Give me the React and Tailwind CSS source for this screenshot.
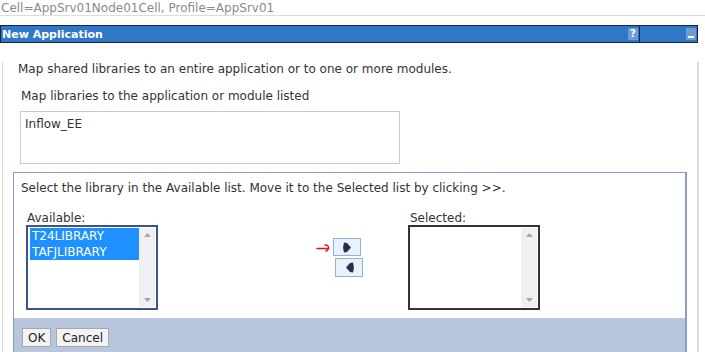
const FONT = { fontFamily: '"DejaVu Sans", Verdana, sans-serif' };

const Arrow = ({ left }) => (
  <svg width="9" height="11" viewBox="0 0 9 11" className="block">
    <polygon
      points={left ? "8,0.5 5,1 1,5.5 5,10 8,10.5 9,5.5" : "1,0.5 4,1 8,5.5 4,10 1,10.5 0,5.5"}
      fill="#2b2d4e"
    />
  </svg>
);

const ListBox = ({ items, border }) => (
  <div className={`flex w-[132px] h-[85px] bg-white border ${border}`}>
    <div className="flex-1 pt-[1px] pl-[2px]">
      {items.map((it) => (
        <div key={it} className="h-[16px] w-[109px] bg-[#1e90ff] text-white text-[12px] leading-[16px] pl-[2px]">
          {it}
        </div>
      ))}
    </div>
    <div className="w-[16px] my-[1px] mr-[1px] bg-[#f0f0f0] flex flex-col justify-between items-center py-[5px]">
      <svg width="7" height="4"><polygon points="0,4 3.5,0 7,4" fill="#a6a6a6" /></svg>
      <svg width="7" height="4"><polygon points="0,0 3.5,4 7,0" fill="#a6a6a6" /></svg>
    </div>
  </div>
);

export default function App() {
  return (
    <div className="w-[705px] h-[352px] overflow-hidden bg-white text-[#333]" style={FONT}>
      {/* breadcrumb */}
      <div className="h-[16px] border-b border-[#dcdcdc] text-[12px] leading-[14px] text-[#8a8a8a] pl-[1px] pt-[1px]">
        Cell=AppSrv01Node01Cell, Profile=AppSrv01
      </div>

      <div className="mt-[9px] w-[699px]">
        {/* title bar */}
        <div className="flex h-[18px] w-[698px] border border-[#17263f] bg-[#3077c8]">
          <div className="flex-1 flex items-center pl-[1px] text-white text-[11px] font-bold leading-none">
            New Application
            <div className="ml-auto mr-[1px] w-[10px] h-[12px] bg-[#6d9bd3] text-white text-[10px] font-bold flex items-center justify-center">?</div>
          </div>
          <div className="w-[58px] border-l border-[#17263f] flex items-center justify-end pr-[1px]">
            <div className="w-[10px] h-[12px] bg-[#6d9bd3] flex items-end justify-center pb-[2px]">
              <div className="w-[6px] h-[2px] bg-white" />
            </div>
          </div>
        </div>

        {/* body */}
        <div className="border-l border-[#dcdcdc] border-r-2 ml-[2px] h-[320px]">
          <p className="mt-[19px] ml-[15px] text-[12px] leading-[15px]">
            Map shared libraries to an entire application or to one or more modules.
          </p>
          <p className="mt-[12px] ml-[18px] text-[12px] leading-[15px]">
            Map libraries to the application or module listed
          </p>
          <div className="mt-[7px] ml-[17px] w-[380px] h-[53px] border border-[#cacaca] pl-[4px] pt-[5px] text-[12px] leading-[15px]">
            Inflow_EE
          </div>

          {/* library panel */}
          <div className="mt-[8px] ml-[10px] w-[674px] border-t border-l border-r-2 border-[#8a9cc4]">
            <div className="h-[145px] bg-white">
              <p className="pt-[8px] pl-[7px] text-[12px] leading-[15px]">
                Select the library in the Available list. Move it to the Selected list by clicking &gt;&gt;.
              </p>
              <div className="flex mt-[16px]">
                <div className="ml-[12px]">
                  <div className="text-[12px] leading-[13px] pl-[1px]">Available:</div>
                  <ListBox items={["T24LIBRARY", "TAFJLIBRARY"]} border="border-[#3b5589] border-[2px]" />
                </div>
                <div className="ml-[175px] pt-[26px] flex flex-col">
                  <div className="flex items-center -ml-[17px]">
                    <svg width="16" height="10" viewBox="0 0 16 10" className="mr-[1px]">
                      <path d="M1 6.5 H11.5 M9 3 Q13 3 12.5 6.5 Q12 8.5 10 9" stroke="#e8101a" strokeWidth="1.4" fill="none" strokeLinecap="round" />
                    </svg>
                    <button className="w-[28px] h-[18px] bg-[#e9f1fc] border border-[#92b2dc] flex items-center justify-center">
                      <Arrow />
                    </button>
                  </div>
                  <button className="mt-[2px] ml-[2px] w-[28px] h-[19px] bg-[#e9f1fc] border border-[#92b2dc] flex items-center justify-center">
                    <Arrow left />
                  </button>
                </div>
                <div className="ml-[45px]">
                  <div className="text-[12px] leading-[13px] pl-[2px]">Selected:</div>
                  <ListBox items={[]} border="border-[#333] border-[2px]" />
                </div>
              </div>
            </div>
            {/* footer */}
            <div className="h-[40px] bg-[#b8c6dd] flex gap-[5px] pl-[8px] pt-[10px]">
              <button className="h-[19px] px-[5px] bg-[#f3f3f3] border border-[#a8a8a8] text-[12px] leading-none text-[#222]">OK</button>
              <button className="h-[19px] px-[5px] bg-[#f3f3f3] border border-[#a8a8a8] text-[12px] leading-none text-[#222]">Cancel</button>
            </div>
          </div>
        </div>
      </div>
    </div>
  );
}
